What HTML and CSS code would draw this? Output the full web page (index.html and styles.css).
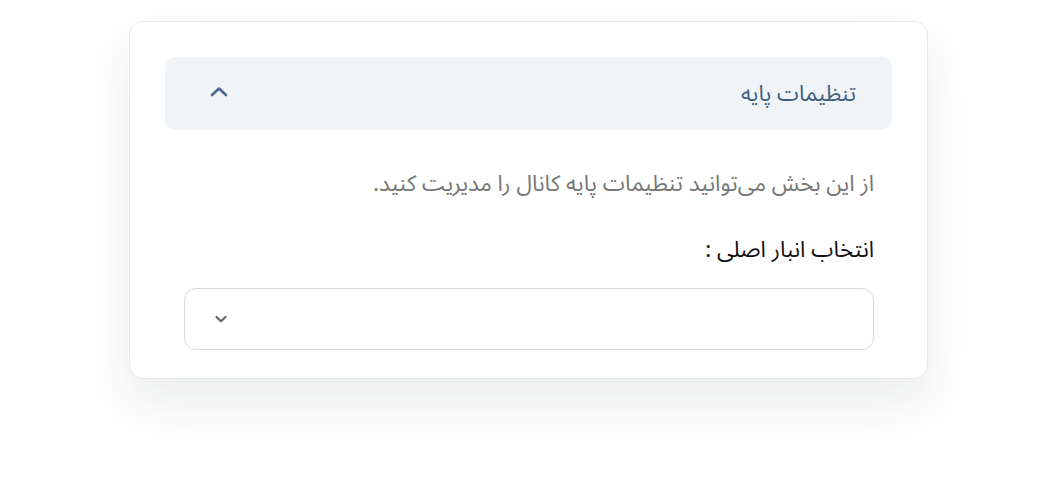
FILE: index.html
```html
<!DOCTYPE html>
<html lang="fa" dir="rtl">
<head>
<meta charset="utf-8">
<link rel="stylesheet" href="styles.css">
</head>
<body>
<div class="page">
  <section class="card">
    <div class="acc-head">
      <span class="acc-title">تنظیمات پایه</span>
      <svg class="chev-up" width="20" height="14" viewBox="0 0 20 14"><path d="M3 10 L10 3.5 L17 10" fill="none" stroke="#4a6a8c" stroke-width="2.6" stroke-linecap="round" stroke-linejoin="round"/></svg>
    </div>
    <div class="acc-body">
      <p class="desc">از این بخش می‌توانید تنظیمات پایه کانال را مدیریت کنید.</p>
      <label class="field-label">انتخاب انبار اصلی :</label>
      <div class="select">
        <svg class="chev-down" width="14" height="10" viewBox="0 0 14 10"><path d="M2.5 3 L7 7.2 L11.5 3" fill="none" stroke="#666" stroke-width="2.2" stroke-linecap="round" stroke-linejoin="round"/></svg>
      </div>
    </div>
  </section>
</div>
</body>
</html>
```
FILE: styles.css
```css
html, body {
  margin: 0;
  padding: 0;
  background: #ffffff;
}
body {
  font-family: "Noto Sans Arabic", "Noto Sans", "DejaVu Sans", sans-serif;
}
.page {
  padding: 21px 0 100px 0;
  display: flex;
  justify-content: center;
}
.card {
  width: 727px;
  margin-left: 1px;
  padding: 35px 35px 28px 35px;
  background: #fff;
  border: 1px solid #e6e9eb;
  border-radius: 14px;
  box-shadow: 0 24px 50px rgba(30, 40, 50, 0.09);
}
.acc-head {
  height: 73px;
  background: #f1f4f7;
  border-radius: 10px;
  display: flex;
  align-items: center;
  justify-content: space-between;
  padding: 0 36px 0 44px;
}
.acc-title {
  font-size: 22px;
  line-height: 28px;
  color: #3e5f82;
}
.chev-up {
  display: block;
  margin-top: -4px;
}
.acc-body {
  padding: 0 18px 0 19px;
}
.desc {
  margin: 40px 0 0 0;
  font-size: 22.4px;
  color: #777;
  line-height: 28px;
}
.field-label {
  display: block;
  margin-top: 38px;
  font-size: 22.4px;
  color: #111;
  line-height: 28px;
}
.select {
  margin-top: 24px;
  height: 60px;
  border: 1px solid #dcdcdc;
  border-radius: 12px;
  display: flex;
  align-items: center;
  justify-content: flex-end;
  padding-left: 29px;
}
.chev-down {
  display: block;
}
```
